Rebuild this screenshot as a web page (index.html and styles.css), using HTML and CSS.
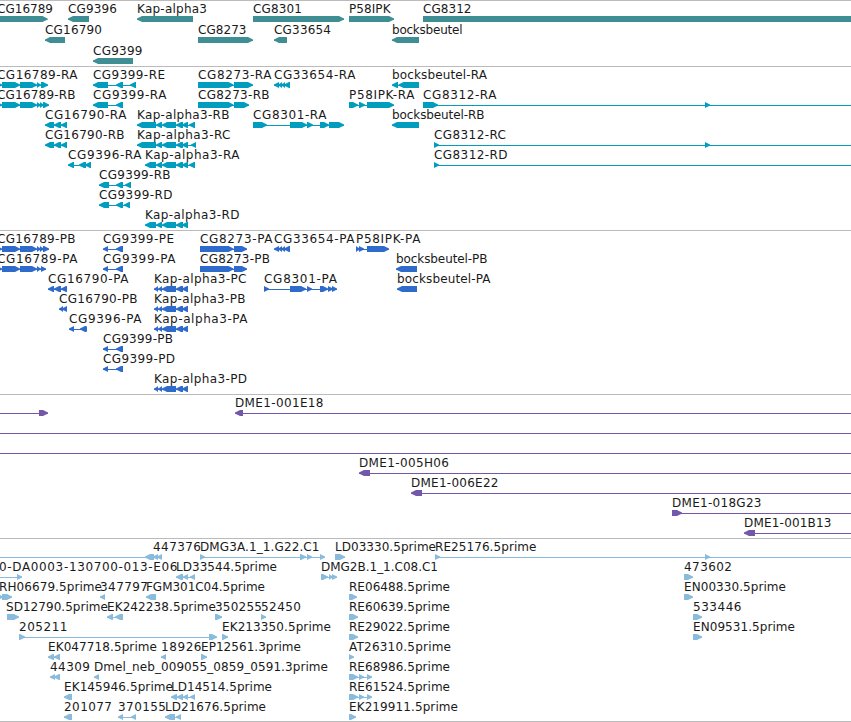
FILE: index.html
```
<!DOCTYPE html>
<html lang="en">
  <head>
    <meta charset="UTF-8" />
    <meta name="viewport" content="width=device-width, initial-scale=1.0" />
    <title>Genome tracks</title>
    <link rel="stylesheet" href="styles.css">
  </head>

  <body>
    <div class="browser">
      <div class="track gene" data-track="gene"></div>
      <div class="track mrna" data-track="mrna"></div>
      <div class="track cds" data-track="cds"></div>
      <div class="track bac" data-track="bac"></div>
      <div class="track est" data-track="est"></div>
    </div>
    <script src="tracks.js"></script>
  </body>
</html>
```

FILE: styles.css
```
* {
  margin: 0;
  padding: 0;
}

body {
  background-color: #fff;
  overflow: hidden;
}

.browser {
  width: 851px;
  overflow: hidden;
  border-bottom: 1px solid #bbb;
}

.track {
  border-top: 1px solid #bbb;
  padding-bottom: 3px;
}

.row {
  display: block;
  width: 100%;
  height: 20px;
  overflow: visible;
}

.row text {
  font-family: "DejaVu Sans", sans-serif;
  font-size: 12px;
  fill: #1a1a1a;
}

.gene {
  color: #3e8e94;
  padding-bottom: 2px;
}

.gene .row {
  height: 21px;
}

.mrna {
  color: #009dbf;
}

.cds {
  color: #2f6bcb;
}

.bac {
  color: #7357a8;
}

.est {
  color: #88bbdc;
  padding-bottom: 2px;
}

.glyph {
  fill: currentColor;
}
```

FILE: tracks.js
```
// feature: [label, label start, label end, strand, exons, line start, line end]
// the line runs from the first exon to the last one unless it is given
var rna16790 = [[45, 54], [54, 61], [61, 67]];
var kapBody = [[156, 162], [162, 176], [176, 183], [182, 188]];
var kapCds = [[154, 158], [158, 162], [162, 176], [176, 183], [182, 188]];
var cds9399 = [[103, 108], [116, 123]];
var cg33654 = [[274, 279], [278, 282], [281, 285], [284, 290]];
var cg16789 = [[-9, 2], [2, 20], [20, 37]];

var tracks = {
  gene: [
    [
      ["CG16789", -3, 53, "+", [[-10, 47.5]]],
      ["CG9396", 68, 117, "-", [[68, 89]]],
      ["Kap-alpha3", 137, 207, "-", [[137, 193]]],
      ["CG8301", 253, 302, "+", [[253, 344]]],
      ["P58IPK", 349, 390.5, "+", [[349, 394]]],
      ["CG8312", 423, 471.5, "+", [[423, 900]]]
    ],
    [
      ["CG16790", 45, 102, "-", [[45, 65]]],
      ["CG8273", 198, 246.5, "+", [[198, 253]]],
      ["CG33654", 274, 331, "-", [[274, 287]]],
      ["bocksbeutel", 392, 462.5, "-", [[392, 419]]]
    ],
    [["CG9399", 93, 142.5, "-", [[93, 133]]]]
  ],
  mrna: [
    [
      ["CG16789-RA", -3, 77.5, "+", cg16789.concat([[37, 41], [41, 48]])],
      ["CG9399-RE", 93, 165, "-", [[93, 108], [116, 123], [130, 136]]],
      ["CG8273-RA", 198, 271.5, "+", [[198, 233.5], [234, 253]]],
      ["CG33654-RA", 274, 355.5, "-", cg33654],
      ["bocksbeutel-RA", 392, 487, "-", [[392, 398], [398.5, 419]]]
    ],
    [
      ["CG16789-RB", -3, 75.5, "+", cg16789.concat([[37, 41], [40, 44], [43, 49]])],
      ["CG9399-RA", 93, 166.5, "-", [[93, 108], [116, 123]]],
      ["CG8273-RB", 198, 269.5, "+", [[198, 233.5], [234, 249]]],
      ["P58IPK-RA", 349, 414.5, "+", [[349, 358], [359, 365], [367, 394]]],
      ["CG8312-RA", 423, 496.5, "+", [[423, 438], [705, 710]], 423, 860]
    ],
    [
      ["CG16790-RA", 45, 126.5, "-", rna16790],
      ["Kap-alpha3-RB", 137, 229.5, "-", [[137, 156]].concat(kapBody, [[189, 195]])],
      ["CG8301-RA", 253, 326.5, "+", [[253, 267], [290, 307], [307, 313], [320, 329], [329, 344]]],
      ["bocksbeutel-RB", 392, 484.5, "-", [[392, 419]]]
    ],
    [
      ["CG16790-RB", 45, 124.5, "-", rna16790],
      ["Kap-alpha3-RC", 137, 230.5, "-", [[137, 156]].concat(kapBody, [[191, 196]])],
      ["CG8312-RC", 434, 506, "+", [[434, 439], [705, 710]], 434, 860]
    ],
    [
      ["CG9396-RA", 68, 141.5, "-", [[68, 74], [79, 86], [85, 91]]],
      ["Kap-alpha3-RA", 145, 239.5, "-", [[145, 156]].concat(kapBody, [[189, 195]])],
      ["CG8312-RD", 434, 507.5, "+", [[434, 439]], 434, 860]
    ],
    [["CG9399-RB", 99, 170.5, "-", [[99, 109], [116, 123], [125, 131]]]],
    [["CG9399-RD", 99, 172.5, "-", [[99, 109], [116, 123], [124, 130]]]],
    [["Kap-alpha3-RD", 145, 239.5, "-", [[145, 156]].concat(kapBody)]]
  ],
  cds: [
    [
      ["CG16789-PB", -3, 75.5, "+", cg16789.concat([[37, 41], [40, 44], [43, 49]])],
      ["CG9399-PE", 103, 174, "-", cds9399],
      ["CG8273-PA", 200, 272.5, "+", [[200, 233.5], [234, 247]]],
      ["CG33654-PA", 274, 354.5, "-", cg33654],
      ["P58IPK-PA", 356, 420.5, "+", [[356, 360], [359, 364], [367, 389]]]
    ],
    [
      ["CG16789-PA", -3, 77.5, "+", cg16789.concat([[37, 41], [41, 46]])],
      ["CG9399-PA", 103, 175.5, "-", cds9399],
      ["CG8273-PB", 200, 270, "+", [[200, 233.5], [234, 247]]],
      ["bocksbeutel-PB", 396, 487.5, "-", [[396, 417]]]
    ],
    [
      ["CG16790-PA", 48, 128.5, "-", [[48, 54], [54, 61], [61, 67]]],
      ["Kap-alpha3-PC", 154, 246.5, "-", kapCds],
      ["CG8301-PA", 264, 337, "+", [[264, 269], [290, 306], [307, 312], [320, 328], [328, 333], [332, 337]]],
      ["bocksbeutel-PA", 397, 490.5, "-", [[397, 417]]]
    ],
    [
      ["CG16790-PB", 59, 137.5, "-", [[59, 63], [62, 67]]],
      ["Kap-alpha3-PB", 154, 245.5, "-", kapCds]
    ],
    [
      ["CG9396-PA", 69, 141.5, "-", [[69, 74], [80, 86], [83, 87]]],
      ["Kap-alpha3-PA", 154, 247.5, "-", kapCds]
    ],
    [["CG9399-PB", 103, 173, "-", cds9399]],
    [["CG9399-PD", 103, 175, "-", cds9399]],
    [["Kap-alpha3-PD", 154, 247, "-", kapCds]]
  ],
  bac: [
    [
      ["", 0, 0, "+", [[39, 48]], -10, 48],
      ["DME1-001E18", 235, 323.5, "-", [[235, 243]], 235, 860]
    ],
    [["", 0, 0, "+", [], -10, 860]],
    [["", 0, 0, "+", [], -10, 860]],
    [["DME1-005H06", 359, 449, "-", [[359, 370]], 359, 860]],
    [["DME1-006E22", 411, 498.5, "-", [[411, 422]], 411, 860]],
    [["DME1-018G23", 672, 761.5, "+", [[672, 682]], 672, 860]],
    [["DME1-001B13", 744, 831.5, "-", [[744, 755]], 744, 860]]
  ],
  est: [
    [
      ["447376", 153, 201, "-", [[145, 154], [153, 158], [157, 162]], -10, 162],
      ["DMG3A.1_1.G22.C1", 200, 319.5, "+", [[200, 205], [300, 306], [307, 312], [320, 325]]],
      ["LD03330.5prime", 335, 436, "+", [[335, 345]]],
      ["RE25176.5prime", 435, 536.5, "+", [[435, 440], [705, 710]], 435, 860]
    ],
    [
      ["0-DA0003-130700-013-E06", -1, 177.5, "+", [[17, 22]], -10, 22],
      ["LD33544.5prime", 176, 277, "-", [[176, 183], [183, 188], [190, 195]]],
      ["DMG2B.1_1.C08.C1", 321, 438, "+", [[321, 328], [329, 333], [332, 337]]],
      ["473602", 684, 732, "+", [[684, 693]]]
    ],
    [
      ["RH06679.5prime", -1, 102, "+", [[-5, 3], [2, 12]]],
      ["347797", 100, 148, "-", [[100, 105]]],
      ["FGM301C04.5prime", 146, 265, "-", [[146, 156]]],
      ["RE06488.5prime", 349, 450, "+", [[349, 357]]],
      ["EN00330.5prime", 684, 786, "+", [[684, 693]]]
    ],
    [
      ["SD12790.5prime", 6, 108, "+", [[7, 19]]],
      ["EK242238.5prime", 107, 216, "-", [[107, 113], [115, 123]]],
      ["350255", 215, 262, "+", [[215, 222]]],
      ["52450", 261, 301, "+", [[261, 266]]],
      ["RE60639.5prime", 349, 450, "+", [[349, 358]]],
      ["533446", 693, 741.5, "+", [[693, 702]]]
    ],
    [
      ["205211", 19, 67.5, "+", [[19, 25], [209, 217]]],
      ["EK213350.5prime", 222, 331, "+", [[222, 228]]],
      ["RE29022.5prime", 349, 450, "+", [[349, 358]]],
      ["EN09531.5prime", 693, 795, "+", [[693, 702]]]
    ],
    [
      ["EK047718.5prime", 48, 157, "-", [[48, 54], [54, 60]]],
      ["18926", 161, 201.5, "-", [[161, 166]]],
      ["EP12561.3prime", 201, 301, "+", [[201, 207]]],
      ["AT26310.5prime", 349, 451, "+", [[349, 354]]]
    ],
    [
      ["44309", 50, 90, "-", [[50, 55], [54, 60]]],
      ["Dmel_neb_009055_0859_0591.3prime", 94, 328, "-", [[94, 99]]],
      ["RE68986.5prime", 349, 450, "+", [[349, 358], [359, 364], [367, 372]]]
    ],
    [
      ["EK145946.5prime", 64, 173, "-", [[64, 72]]],
      ["LD14514.5prime", 171, 272, "-", [[171, 177], [177, 183], [183, 188], [190, 195]]],
      ["RE61524.5prime", 349, 450, "+", [[349, 358], [359, 364], [367, 372]]]
    ],
    [
      ["201077", 64, 112, "-", [[64, 72]]],
      ["370155", 118, 166, "-", [[118, 123], [131, 136]]],
      ["LD21676.5prime", 165, 266, "-", [[165, 175], [176, 181]]],
      ["EK219911.5prime", 349, 458, "+", [[349, 356]]]
    ]
  ]
};

// block with a pointed end on the strand side
function exon(strand, from, to) {
  var head = Math.min(5, to - from);
  var dir = strand === "+" ? 1 : -1;
  var base = dir > 0 ? from : to;
  var tip = dir > 0 ? to : from;
  var neck = tip - dir * head;
  var mid = tip - dir * 2;
  var points = [
    [base, 15],
    [neck, 15],
    [mid, 16.6],
    [tip, 17.5],
    [tip, 18.7],
    [mid, 19.6],
    [neck, 21],
    [base, 21]
  ];
  return '<polygon class="glyph" points="' + points.join(" ") + '"/>';
}

function feature(f) {
  var exons = f[4];
  var from = f[5] === undefined ? exons[0][0] : f[5];
  var to = f[6] === undefined ? exons[exons.length - 1][1] : f[6];
  var html = '<rect class="glyph" x="' + from + '" y="18" width="' + (to - from) + '" height="1"/>';
  for (var i = 0; i < exons.length; i++) {
    html += exon(f[3], exons[i][0], exons[i][1]);
  }
  if (f[0]) {
    html += '<text x="' + f[1] + '" y="12" textLength="' + (f[2] - f[1]) + '">' + f[0] + "</text>";
  }
  return html;
}

var els = document.querySelectorAll(".track");
for (var i = 0; i < els.length; i++) {
  els[i].innerHTML = tracks[els[i].dataset.track]
    .map(function (row) {
      return '<svg class="row">' + row.map(feature).join("") + "</svg>";
    })
    .join("");
}
```
